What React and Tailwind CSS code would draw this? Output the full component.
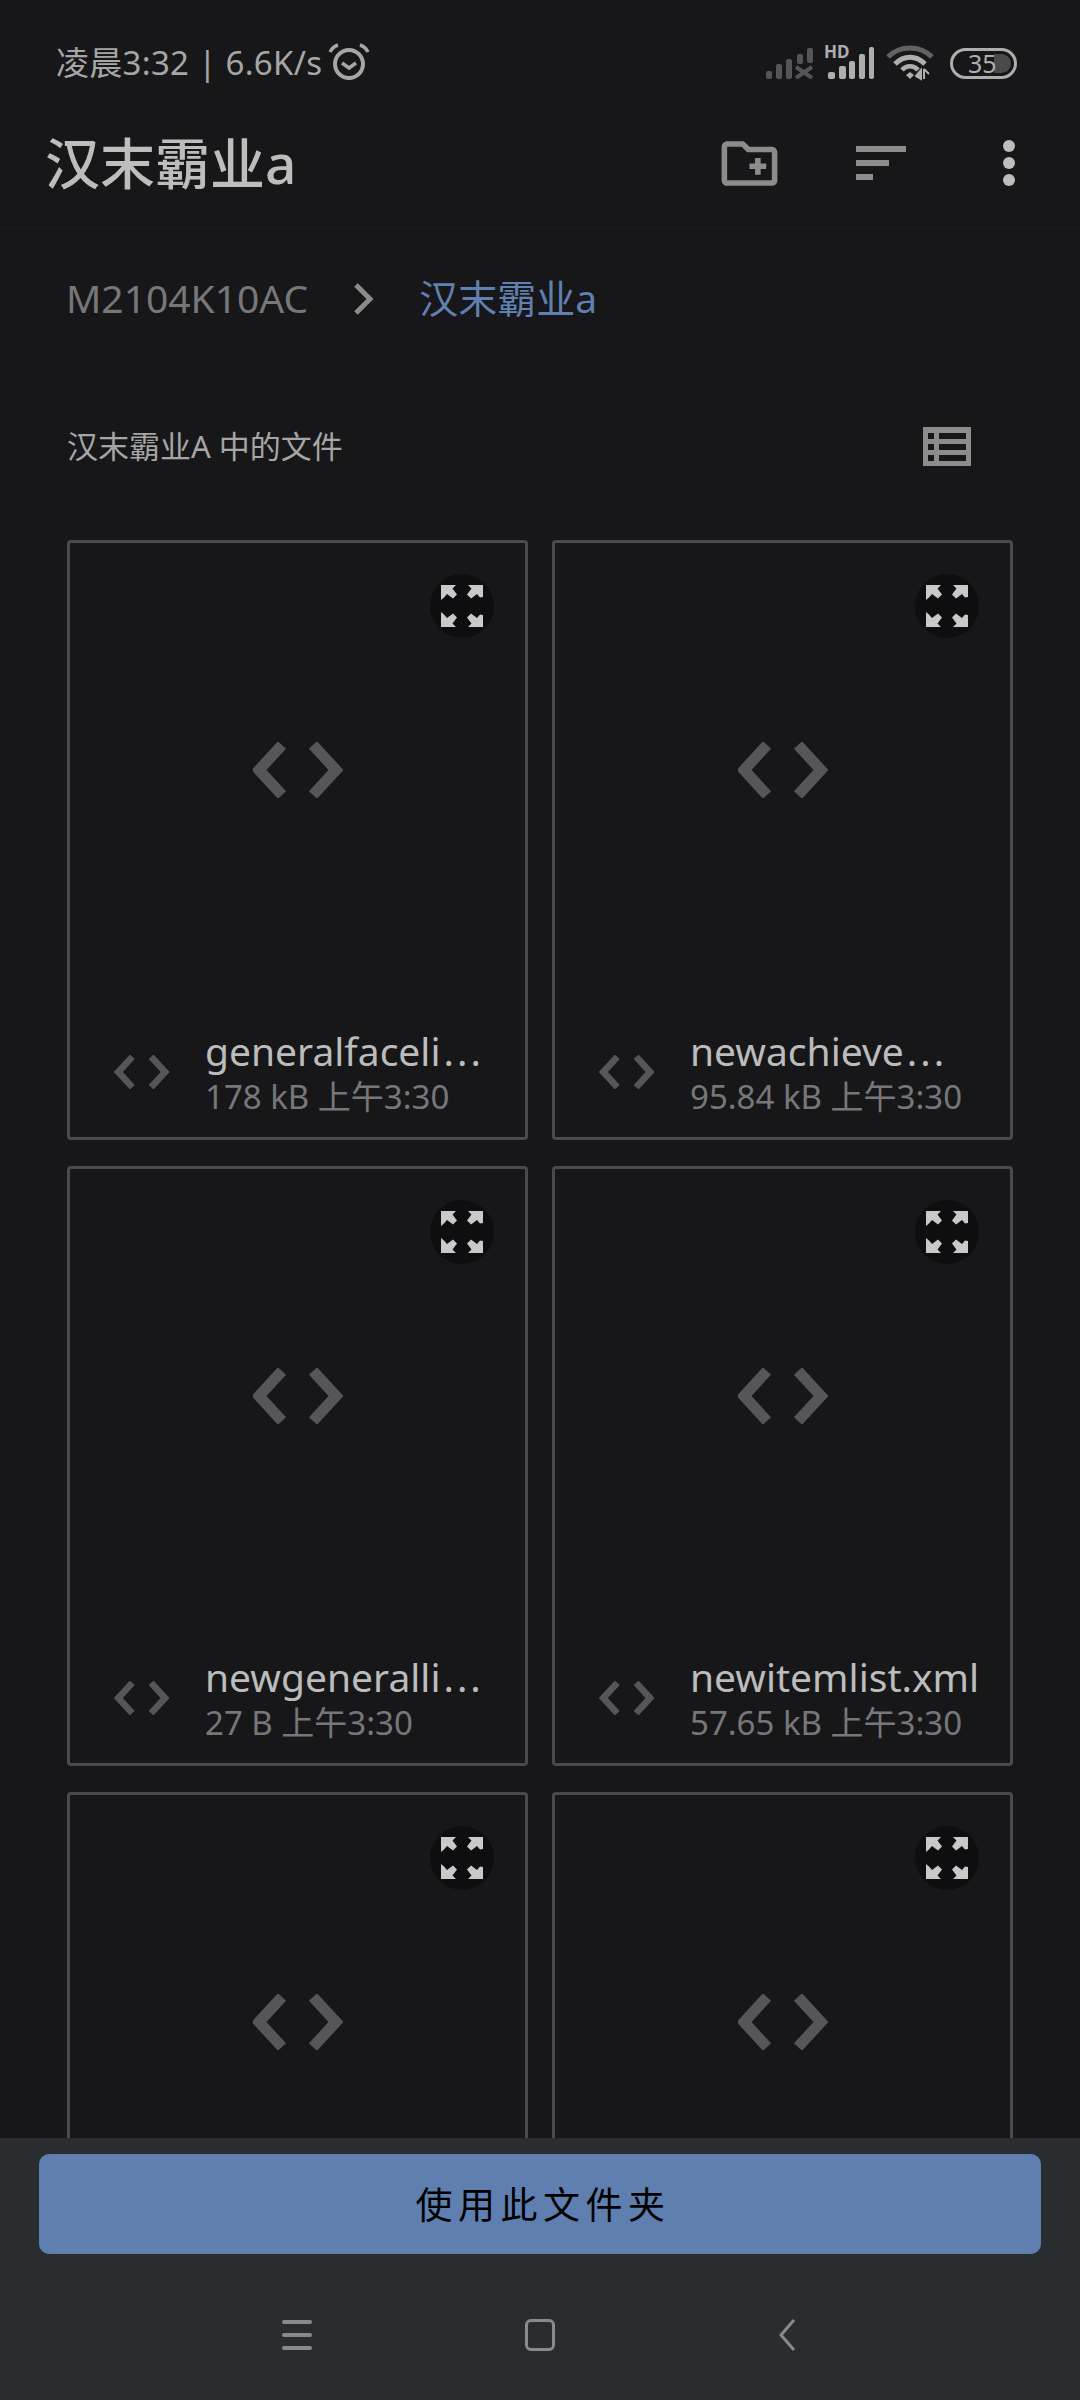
import React from "react";

const files = [
  { name: "generalfaceli", more: true, info: "178 kB 上午3:30" },
  { name: "newachieve", more: true, info: "95.84 kB 上午3:30" },
  { name: "newgeneralli", more: true, info: "27 B 上午3:30" },
  { name: "newitemlist.xml", info: "57.65 kB 上午3:30" },
  { name: "", info: "" },
  { name: "", info: "" },
];

function CodeIcon({ className }) {
  return (
    <svg className={className} viewBox="0 0 90 56" fill="none" stroke="#565658" strokeWidth="11">
      <polyline points="29,3 6,28 29,53" />
      <polyline points="60,3 83,28 60,53" />
    </svg>
  );
}

function ExpandButton() {
  return (
    <div className="absolute right-[31px] top-[31px] flex h-[64px] w-[64px] items-center justify-center rounded-full bg-[#0e0e10]">
      <svg width="42" height="42" viewBox="0 0 42 42" fill="#c9c9c9">
        <path d="M0 0h15l-3.500 3.500 4.500 6-4 4-6-4.500L3 12.500 0 15z" />
        <path d="M42 0H27l3.500 3.500-4.500 6 4 4 6-4.500 3 3.500 3-.5z" />
        <path d="M0 42h15l-3.500-3.500 4.500-6-4-4-6 4.500L3 29.500 0 27z" />
        <path d="M42 42H27l3.500-3.500-4.500-6 4-4 6 4.500 3-3.500 3 .5z" />
      </svg>
    </div>
  );
}

function FileCard({ name, more, info }) {
  return (
    <div className="relative flex h-[600px] flex-col rounded-[4px] border-[3px] border-[#4a4a4c]">
      <ExpandButton />
      <div className="flex h-[453px] items-center justify-center">
        <CodeIcon className="h-[56px] w-[90px]" />
      </div>
      <div className="mt-[30px] flex items-center pl-[44px]">
        <CodeIcon className="h-[34px] w-[56px]" />
        <div className="ml-[35px] min-w-0">
          <div className="h-[50px] whitespace-nowrap text-[39px] leading-[50px] text-[#bcbcbc]">
            {name}
            {more && <span className="ml-[3px] tracking-[3px]">...</span>}
          </div>
          <div className="h-[42px] whitespace-nowrap text-[33px] leading-[42px] text-[#77777a]">{info}</div>
        </div>
      </div>
    </div>
  );
}

function StatusIcons() {
  return (
    <div className="flex items-center">
      <svg width="48" height="32" viewBox="0 0 48 32" fill="#555557">
        <rect x="0" y="24" width="6" height="8" rx="2" />
        <rect x="10" y="17" width="6" height="15" rx="2" />
        <rect x="20" y="12" width="6" height="20" rx="2" />
        <rect x="31" y="7" width="6" height="10" rx="2" />
        <rect x="41" y="1" width="6" height="15" rx="2" />
        <path d="M30 20l16 11M46 20L30 31" stroke="#555557" strokeWidth="4" />
      </svg>
      <div className="relative ml-[12px] h-[32px] w-[48px]">
        <svg className="absolute bottom-0 left-0" width="48" height="32" viewBox="0 0 48 32" fill="#aeaeae">
          <rect x="2" y="25" width="7" height="7" rx="2" />
          <rect x="13" y="19" width="7" height="13" rx="2" />
          <rect x="23" y="14" width="6" height="18" rx="2" />
          <rect x="33" y="7" width="6" height="25" rx="2" />
          <rect x="43" y="0" width="5" height="32" rx="2" />
        </svg>
        <span className="absolute left-[-2px] top-[-4px] text-[17px] font-bold leading-[18px] text-[#aeaeae]">HD</span>
      </div>
      <svg className="ml-[12px]" width="48" height="36" viewBox="0 0 48 36" fill="none">
        <path d="M2 12C14 0 34 0 46 12" stroke="#626264" strokeWidth="5" />
        <path d="M9 19C18 10 30 10 39 19" stroke="#aeaeae" strokeWidth="5" />
        <path d="M16 25C20 20 28 20 32 25" stroke="#aeaeae" strokeWidth="4.500" />
        <path d="M20 30l4-3 4 3-4 4z" fill="#aeaeae" />
        <path d="M35 25v9l-5-3zM38 24v10M38 24l5 5" stroke="#aeaeae" strokeWidth="2" fill="#aeaeae" />
      </svg>
      <div className="relative ml-[16px] flex h-[31px] w-[67px] items-center rounded-full border-[3px] border-[#aeaeae] bg-[#17171a]">
        <div className="absolute bottom-[3px] right-[3px] top-[3px] w-[17px] rounded-r-full bg-[#4a4a4c]" />
        <span className="relative ml-[15px] text-[25px] leading-[25px] text-[#aeaeae]">35</span>
      </div>
    </div>
  );
}

export default function App() {
  return (
    <div
      className="flex h-[2400px] w-[1080px] flex-col overflow-hidden bg-[#17171a]"
      style={{ fontFamily: '"Noto Sans", "Noto Sans CJK SC", sans-serif' }}
    >
      {/* status bar + title */}
      <div className="border-b border-[#1c1c1f] pb-[28px]">
        <div className="flex h-[126px] items-center justify-between pl-[56px] pr-[63px]">
          <div className="flex items-center">
            <span className="text-[33px] leading-[40px] tracking-[0.3px] text-[#a6a6a6]">凌晨3:32 | 6.6K/s</span>
            <svg className="ml-[6px] mt-[-3px]" width="42" height="38" viewBox="0 0 42 38" fill="none" stroke="#a6a6a6">
              <circle cx="21" cy="21" r="14" strokeWidth="4" />
              <path d="M14 20l7 5 7-5" strokeWidth="3.500" />
              <path d="M2 9C4 5 7 3 10 2M40 9C38 5 35 3 32 2" strokeWidth="3.500" />
            </svg>
          </div>
          <StatusIcons />
        </div>
        <div className="flex h-[74px] items-center pl-[45px] pr-[64px]">
          <h1 className="flex-1 text-[55px] font-medium leading-[74px] text-[#bdbdbd]">汉末霸业a</h1>
          <svg width="67" height="67" viewBox="0 0 24 24" fill="#8c8c8c">
            <path d="M20 6h-8l-2-2H4c-1.110 0-1.990.89-1.990 2L2 18c0 1.110.89 2 2 2h16c1.110 0 2-.89 2-2V8c0-1.110-.89-2-2-2zm0 12H4V6h5.170l2 2H20v10zm-8-4h2v2h2v-2h2v-2h-2v-2h-2v2h-2v2z" />
          </svg>
          <div className="ml-[73px] flex flex-col gap-[8px]">
            <div className="h-[6px] w-[50px] bg-[#8c8c8c]" />
            <div className="h-[6px] w-[33px] bg-[#8c8c8c]" />
            <div className="h-[6px] w-[17px] bg-[#8c8c8c]" />
          </div>
          <div className="ml-[97px] mr-[1px] flex flex-col gap-[5px]">
            <div className="h-[12px] w-[12px] rounded-full bg-[#bdbdbd]" />
            <div className="h-[12px] w-[12px] rounded-full bg-[#bdbdbd]" />
            <div className="h-[12px] w-[12px] rounded-full bg-[#bdbdbd]" />
          </div>
        </div>
      </div>

      <main className="min-h-0 flex-1 overflow-hidden px-[67px]">
        {/* breadcrumb */}
        <div className="ml-[-1px] flex h-[139px] items-center">
          <span className="text-[39px] text-[#77777a]">M2104K10AC</span>
          <svg className="ml-[43px]" width="24" height="36" viewBox="0 0 24 36" fill="none" stroke="#8c8c8c" strokeWidth="5">
            <polyline points="5,4 19,18 5,32" />
          </svg>
          <span className="ml-[44px] text-[39px] text-[#5f80b0]">汉末霸业a</span>
        </div>

        <div className="mb-[16px] flex h-[156px] items-center justify-between pr-[42px]">
          <span className="text-[31px] text-[#a6a6a6]">汉末霸业A 中的文件</span>
          <svg width="48" height="39" viewBox="0 0 48 39">
            <rect width="48" height="39" fill="#8c8c8c" />
            <g fill="#17171a">
              <rect x="5" y="6" width="6" height="6" />
              <rect x="5" y="17" width="6" height="6" />
              <rect x="5" y="28" width="6" height="6" />
              <rect x="16" y="6" width="27" height="6" />
              <rect x="16" y="17" width="27" height="6" />
              <rect x="16" y="28" width="27" height="6" />
            </g>
          </svg>
        </div>

        <div className="grid grid-cols-2 gap-x-[24px] gap-y-[26px]">
          {files.map((file, index) => (
            <FileCard key={index} name={file.name} more={file.more} info={file.info} />
          ))}
        </div>
      </main>

      {/* bottom bar */}
      <div className="flex h-[262px] flex-col bg-[#2a2d30] pt-[16px]">
        <button className="mx-[39px] flex h-[100px] items-center justify-center rounded-[10px] bg-[#5f7fb0] pl-[6px] pt-[2px] text-[37px] tracking-[5.500px] text-black">
          使用此文件夹
        </button>
        <div className="flex flex-1 items-center gap-[213px] pl-[282px] pt-[16px]">
          <div className="flex w-[30px] flex-col gap-[9px]">
            <div className="h-[4px] rounded-full bg-[#8a8a8a]" />
            <div className="h-[4px] rounded-full bg-[#8a8a8a]" />
            <div className="h-[4px] rounded-full bg-[#8a8a8a]" />
          </div>
          <div className="h-[32px] w-[30px] rounded-[6px] border-[3px] border-[#8a8a8a]" />
          <svg className="ml-[10px]" width="18" height="32" viewBox="0 0 18 32" fill="none" stroke="#8a8a8a" strokeWidth="3">
            <polyline points="16,1 3,16 16,31" />
          </svg>
        </div>
      </div>
    </div>
  );
}
